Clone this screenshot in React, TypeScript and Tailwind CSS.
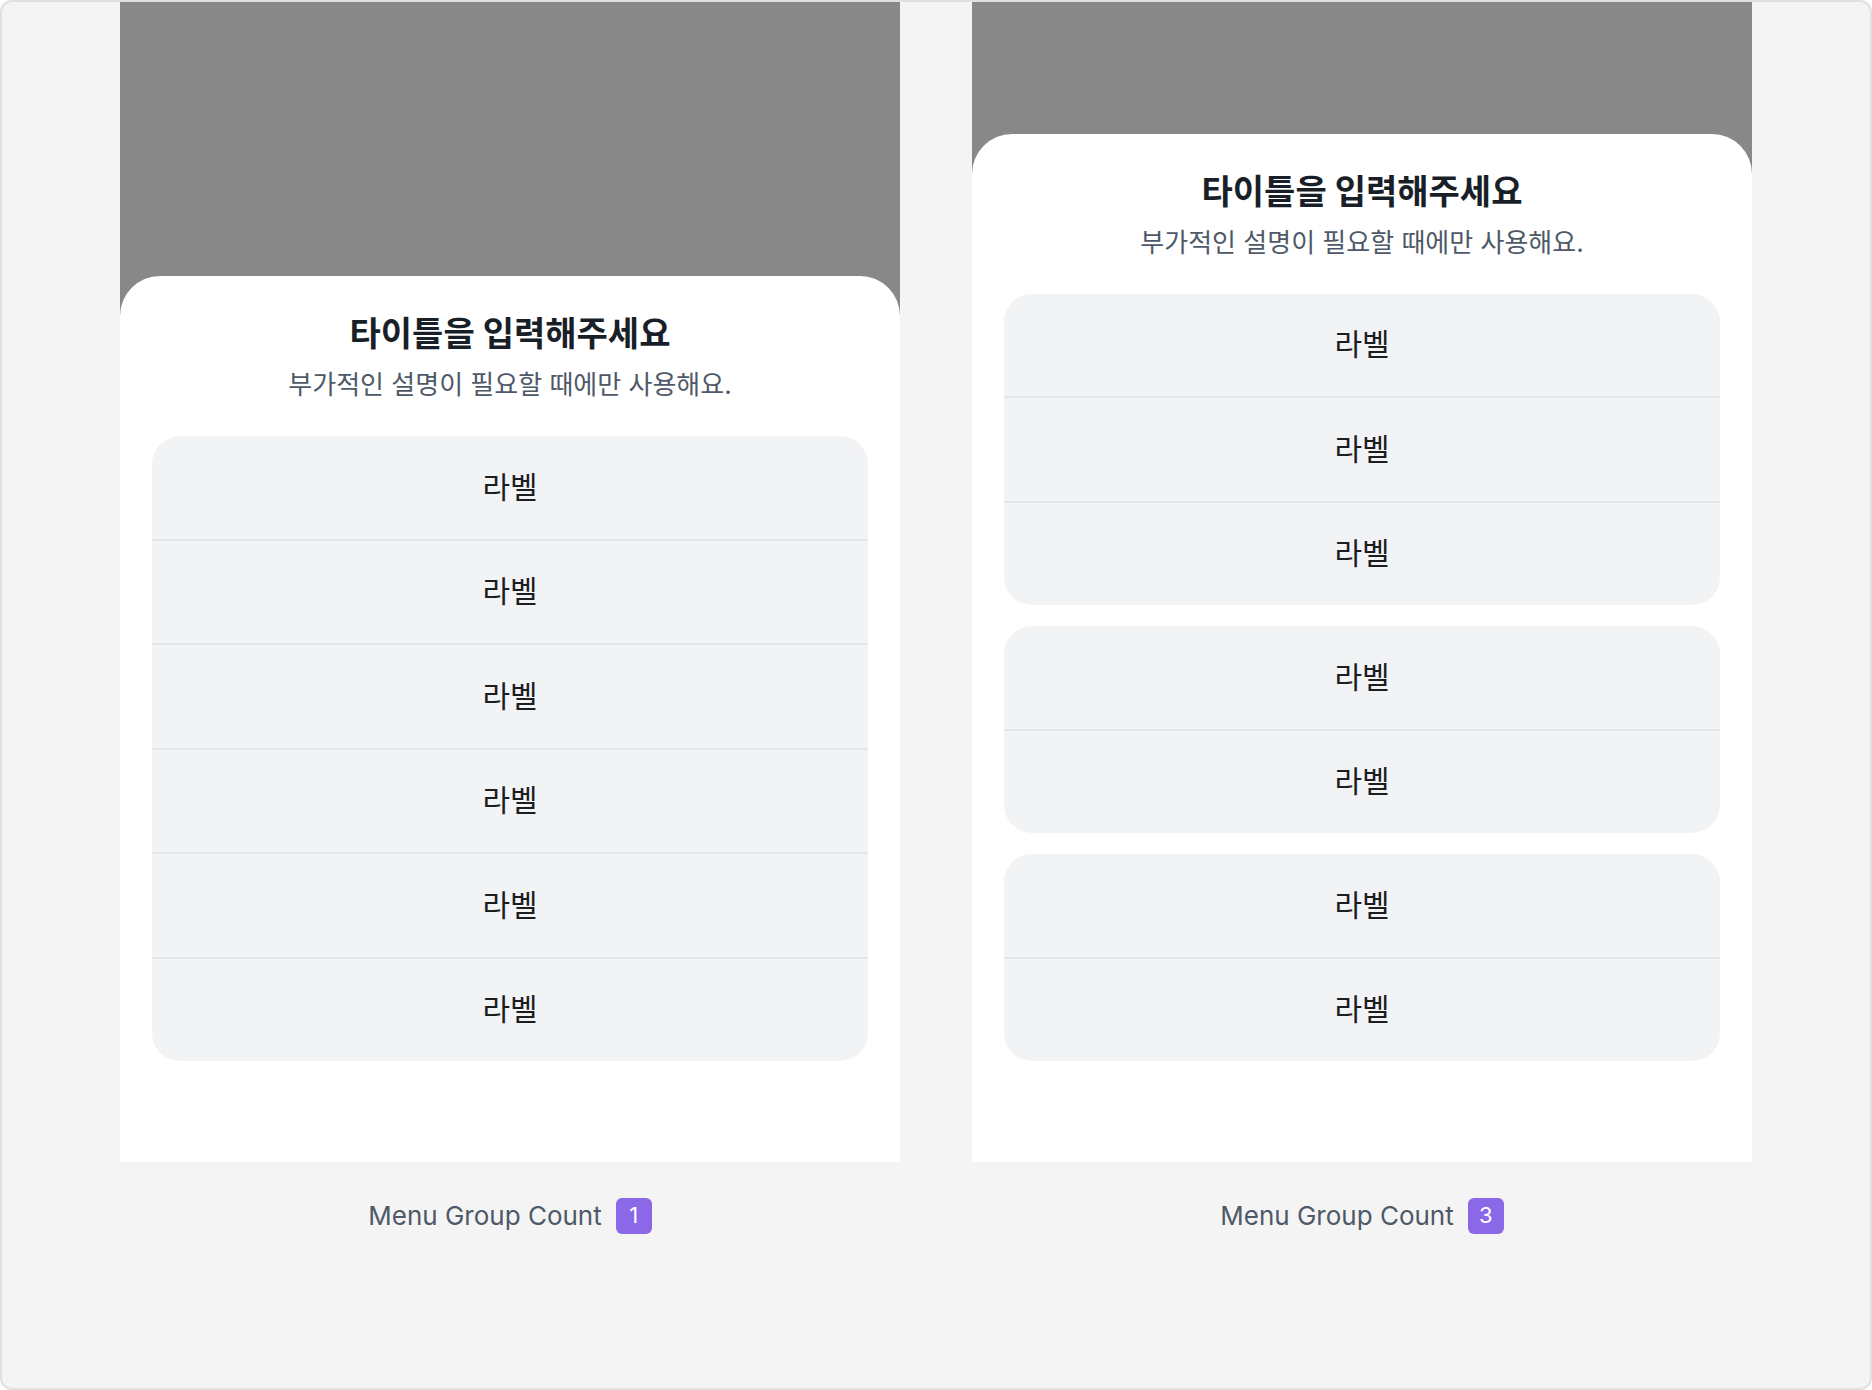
const font = "font-['Inter','Noto_Sans_CJK_KR',sans-serif]";

function MenuGroup({ count }: { count: number }) {
  const rows = Array.from({ length: count });
  return (
    <div className="overflow-hidden rounded-[28px] bg-[#f2f3f5]">
      {rows.map((_, i) => (
        <div key={i}>
          {i > 0 && <div className="h-[2px] bg-[#e5e6e8]" />}
          <div className="flex h-[102.5px] items-center justify-center text-[30px] text-[#1b1d1f]">
            라벨
          </div>
        </div>
      ))}
    </div>
  );
}

function BottomSheet({ groups }: { groups: number[] }) {
  return (
    <div className="flex h-[1160px] w-[780px] flex-col justify-end bg-[#888888]">
      <div className="rounded-t-[40px] bg-white px-8 pb-[101px] pt-[38px]">
        <div className="text-center">
          <h2 className="text-[34px] font-bold leading-[40px] text-[#191f28]">
            타이틀을 입력해주세요
          </h2>
          <p className="mt-[14px] text-[26px] leading-[34px] text-[#4e5968]">
            부가적인 설명이 필요할 때에만 사용해요.
          </p>
        </div>
        <div className="mt-[34px] flex flex-col gap-[21px]">
          {groups.map((n, i) => (
            <MenuGroup key={i} count={n} />
          ))}
        </div>
      </div>
    </div>
  );
}

function Caption({ value }: { value: number }) {
  return (
    <div className="flex items-center justify-center gap-[14px] pt-[34px]">
      <span className="text-[26px] text-[#4e5968]">Menu Group Count</span>
      <span className="flex h-9 w-9 items-center justify-center rounded-md bg-[#8b68e8] text-[22px] text-white">
        {value}
      </span>
    </div>
  );
}

export default function App() {
  const variants = [
    { count: 1, groups: [6] },
    { count: 3, groups: [3, 2, 2] },
  ];

  return (
    <div
      className={`${font} h-[1390px] w-[1872px] overflow-hidden rounded-xl border-2 border-[#e0e0e0] bg-[#f4f4f4]`}
    >
      <div className="flex gap-[72px] pl-[118px]">
        {variants.map((v) => (
          <div key={v.count} className="flex flex-col">
            <BottomSheet groups={v.groups} />
            <Caption value={v.count} />
          </div>
        ))}
      </div>
    </div>
  );
}
